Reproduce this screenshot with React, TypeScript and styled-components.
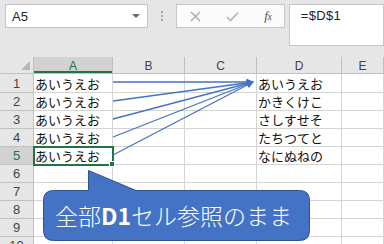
import React from 'react'
import styled, { createGlobalStyle } from 'styled-components'

const GlobalStyle = createGlobalStyle`
  html, body {
    margin: 0;
    padding: 0;
    background: #ffffff;
  }
  * {
    box-sizing: border-box;
  }
`

const GREEN = '#217346'
const GRID = '#d4d4d4'
const HEADER_LINE = '#c0c0c0'
const JP = `"Noto Sans CJK JP", "Noto Sans", sans-serif`

const Page = styled.div`
  position: relative;
  width: 384px;
  height: 244px;
  overflow: hidden;
  background: #ffffff;
  font-family: "Liberation Sans", Arial, sans-serif;
`

const TopBar = styled.div`
  height: 57px;
  background: #e6e6e6;
  display: flex;
  align-items: flex-start;
  padding: 4px 0 0 5px;
`

const NameBox = styled.div`
  width: 150px;
  height: 24px;
  background: #ffffff;
  border: 1px solid #c6c6c6;
  display: flex;
  align-items: center;
  justify-content: space-between;
  padding: 0 7px 0 6px;
  font-size: 13px;
  color: #222;
`

const DropArrow = styled.span`
  width: 0;
  height: 0;
  border-left: 4px solid transparent;
  border-right: 4px solid transparent;
  border-top: 4px solid #6a6a6a;
`

const Grip = styled.div`
  width: 30px;
  height: 24px;
  display: flex;
  flex-direction: column;
  align-items: center;
  justify-content: center;
  gap: 2px;
`

const GripDot = styled.span`
  width: 2px;
  height: 2px;
  background: #a6a6a6;
`

const FxGroup = styled.div`
  width: 109px;
  height: 24px;
  background: #fbfbfb;
  border: 1px solid #c6c6c6;
  display: grid;
  grid-template-columns: 38px 36px 34px;
  align-items: center;
  justify-items: center;
`

const FxLabel = styled.span`
  font-family: "Liberation Serif", "DejaVu Serif", serif;
  font-style: italic;
  font-size: 13px;
  color: #555;
  letter-spacing: -0.5px;

  small {
    font-size: 10px;
  }
`

const FormulaInput = styled.div`
  margin-left: 4px;
  width: 100px;
  height: 42px;
  background: #ffffff;
  border: 1px solid #c6c6c6;
  padding: 3px 0 0 11px;
  font-size: 13px;
  color: #222;
  letter-spacing: 0.3px;
`

const Sheet = styled.div`
  display: grid;
  grid-template-columns: 34px 79px 72px 72px 85px 1fr;
  grid-template-rows: 17px 19px repeat(9, 18px);
`

const Corner = styled.div`
  background: #e6e6e6;
  border-right: 1px solid ${HEADER_LINE};
  border-bottom: 1px solid ${HEADER_LINE};
  display: flex;
  align-items: flex-end;
  justify-content: flex-end;
  padding: 0 3px 3px 0;
`

const CornerMark = styled.span`
  width: 0;
  height: 0;
  border-left: 9px solid transparent;
  border-bottom: 9px solid #b8b8b8;
`

const ColHead = styled.div<{ $active?: boolean }>`
  background: ${({ $active }) => ($active ? '#d2d2d2' : '#e6e6e6')};
  color: ${({ $active }) => ($active ? GREEN : '#444')};
  border-right: 1px solid ${HEADER_LINE};
  border-bottom: 1px solid ${HEADER_LINE};
  box-shadow: ${({ $active }) => ($active ? `inset 0 -2px 0 ${GREEN}` : 'none')};
  font-size: 12px;
  display: flex;
  align-items: center;
  justify-content: center;
  padding-top: 1px;
`

const RowHead = styled.div<{ $active?: boolean }>`
  background: ${({ $active }) => ($active ? '#d2d2d2' : '#e6e6e6')};
  color: ${({ $active }) => ($active ? GREEN : '#444')};
  border-right: 1px solid ${HEADER_LINE};
  border-bottom: 1px solid ${HEADER_LINE};
  font-size: 13px;
  display: flex;
  align-items: center;
  justify-content: center;
`

const Cell = styled.div<{ $selected?: boolean }>`
  position: relative;
  border-right: 1px solid ${GRID};
  border-bottom: 1px solid ${GRID};
  font-family: ${JP};
  font-size: 13px;
  line-height: 1;
  color: #111;
  display: flex;
  align-items: center;
  padding-left: 1px;
  white-space: nowrap;
  outline: ${({ $selected }) => ($selected ? `2px solid ${GREEN}` : 'none')};
  outline-offset: -1px;
  z-index: ${({ $selected }) => ($selected ? 1 : 0)};
`

const FillHandle = styled.span`
  position: absolute;
  right: -3px;
  bottom: -3px;
  width: 6px;
  height: 6px;
  background: ${GREEN};
  border: 1px solid #ffffff;
`

const Arrows = styled.svg`
  position: absolute;
  left: 0;
  top: 0;
  pointer-events: none;
  z-index: 2;
`

const Callout = styled.div`
  position: absolute;
  left: 43px;
  top: 170px;
  width: 268px;
  height: 71px;
  display: flex;
  align-items: center;
  padding: 20px 0 0 12px;
  z-index: 3;
`

const CalloutShape = styled.svg`
  position: absolute;
  left: 0;
  top: 0;
`

const CalloutText = styled.span`
  position: relative;
  font-family: ${JP};
  font-size: 23px;
  font-weight: 300;
  color: #ffffff;
  white-space: nowrap;
  line-height: 1;
  margin-top: -1px;

  b {
    font-weight: 700;
  }
`

const columns = ['A', 'B', 'C', 'D', 'E']
const dValues = ['あいうえお', 'かきくけこ', 'さしすせそ', 'たちつてと', 'なにぬねの']
const arrowStarts = [82, 101, 119, 137, 155]

export default function App() {
  const rows = Array.from({ length: 10 }, (_, i) => i + 1)

  return (
    <Page>
      <GlobalStyle />
      <TopBar>
        <NameBox>
          <span>A5</span>
          <DropArrow />
        </NameBox>
        <Grip>
          <GripDot />
          <GripDot />
          <GripDot />
        </Grip>
        <FxGroup>
          <svg width="11" height="11" viewBox="0 0 11 11">
            <path d="M1 1 L10 10 M10 1 L1 10" stroke="#a6a6a6" strokeWidth="1.3" fill="none" />
          </svg>
          <svg width="13" height="11" viewBox="0 0 13 11">
            <path d="M1 6 L4.5 9.5 L12 1.5" stroke="#b4b4b4" strokeWidth="1.6" fill="none" />
          </svg>
          <FxLabel>
            f<small>x</small>
          </FxLabel>
        </FxGroup>
        <FormulaInput>=$D$1</FormulaInput>
      </TopBar>

      <Sheet>
        <Corner>
          <CornerMark />
        </Corner>
        {columns.map((c) => (
          <ColHead key={c} $active={c === 'A'}>
            {c}
          </ColHead>
        ))}
        {rows.map((r) => (
          <React.Fragment key={r}>
            <RowHead $active={r === 5}>{r}</RowHead>
            <Cell $selected={r === 5}>
              {r <= 5 ? 'あいうえお' : ''}
              {r === 5 && <FillHandle />}
            </Cell>
            <Cell />
            <Cell />
            <Cell>{dValues[r - 1] ?? ''}</Cell>
            <Cell />
          </React.Fragment>
        ))}
      </Sheet>

      <Arrows width="384" height="244" viewBox="0 0 384 244">
        <defs>
          <marker
            id="head"
            viewBox="0 0 10 10"
            refX="9"
            refY="5"
            markerWidth="5.5"
            markerHeight="5.5"
            orient="auto"
          >
            <path d="M0 0 L10 5 L0 10 Z" fill="#4472c4" />
          </marker>
        </defs>
        {arrowStarts.map((y) => (
          <line
            key={y}
            x1="113"
            y1={y}
            x2="253"
            y2="82"
            stroke="#4472c4"
            strokeWidth="1.3"
            markerEnd="url(#head)"
          />
        ))}
      </Arrows>

      <Callout>
        <CalloutShape width="268" height="71" viewBox="0 0 268 71">
          <path
            d="M10.5 20.5 H45.5 V0.5 L93 20.5 H256.5 Q266.5 20.5 266.5 30.5 V60.5 Q266.5 70.5 256.5 70.5 H10.5 Q0.5 70.5 0.5 60.5 V30.5 Q0.5 20.5 10.5 20.5 Z"
            fill="#4472c4"
            stroke="#2f528f"
            strokeWidth="1"
          />
        </CalloutShape>
        <CalloutText>
          全部<b>D1</b>セル参照のまま
        </CalloutText>
      </Callout>
    </Page>
  )
}
